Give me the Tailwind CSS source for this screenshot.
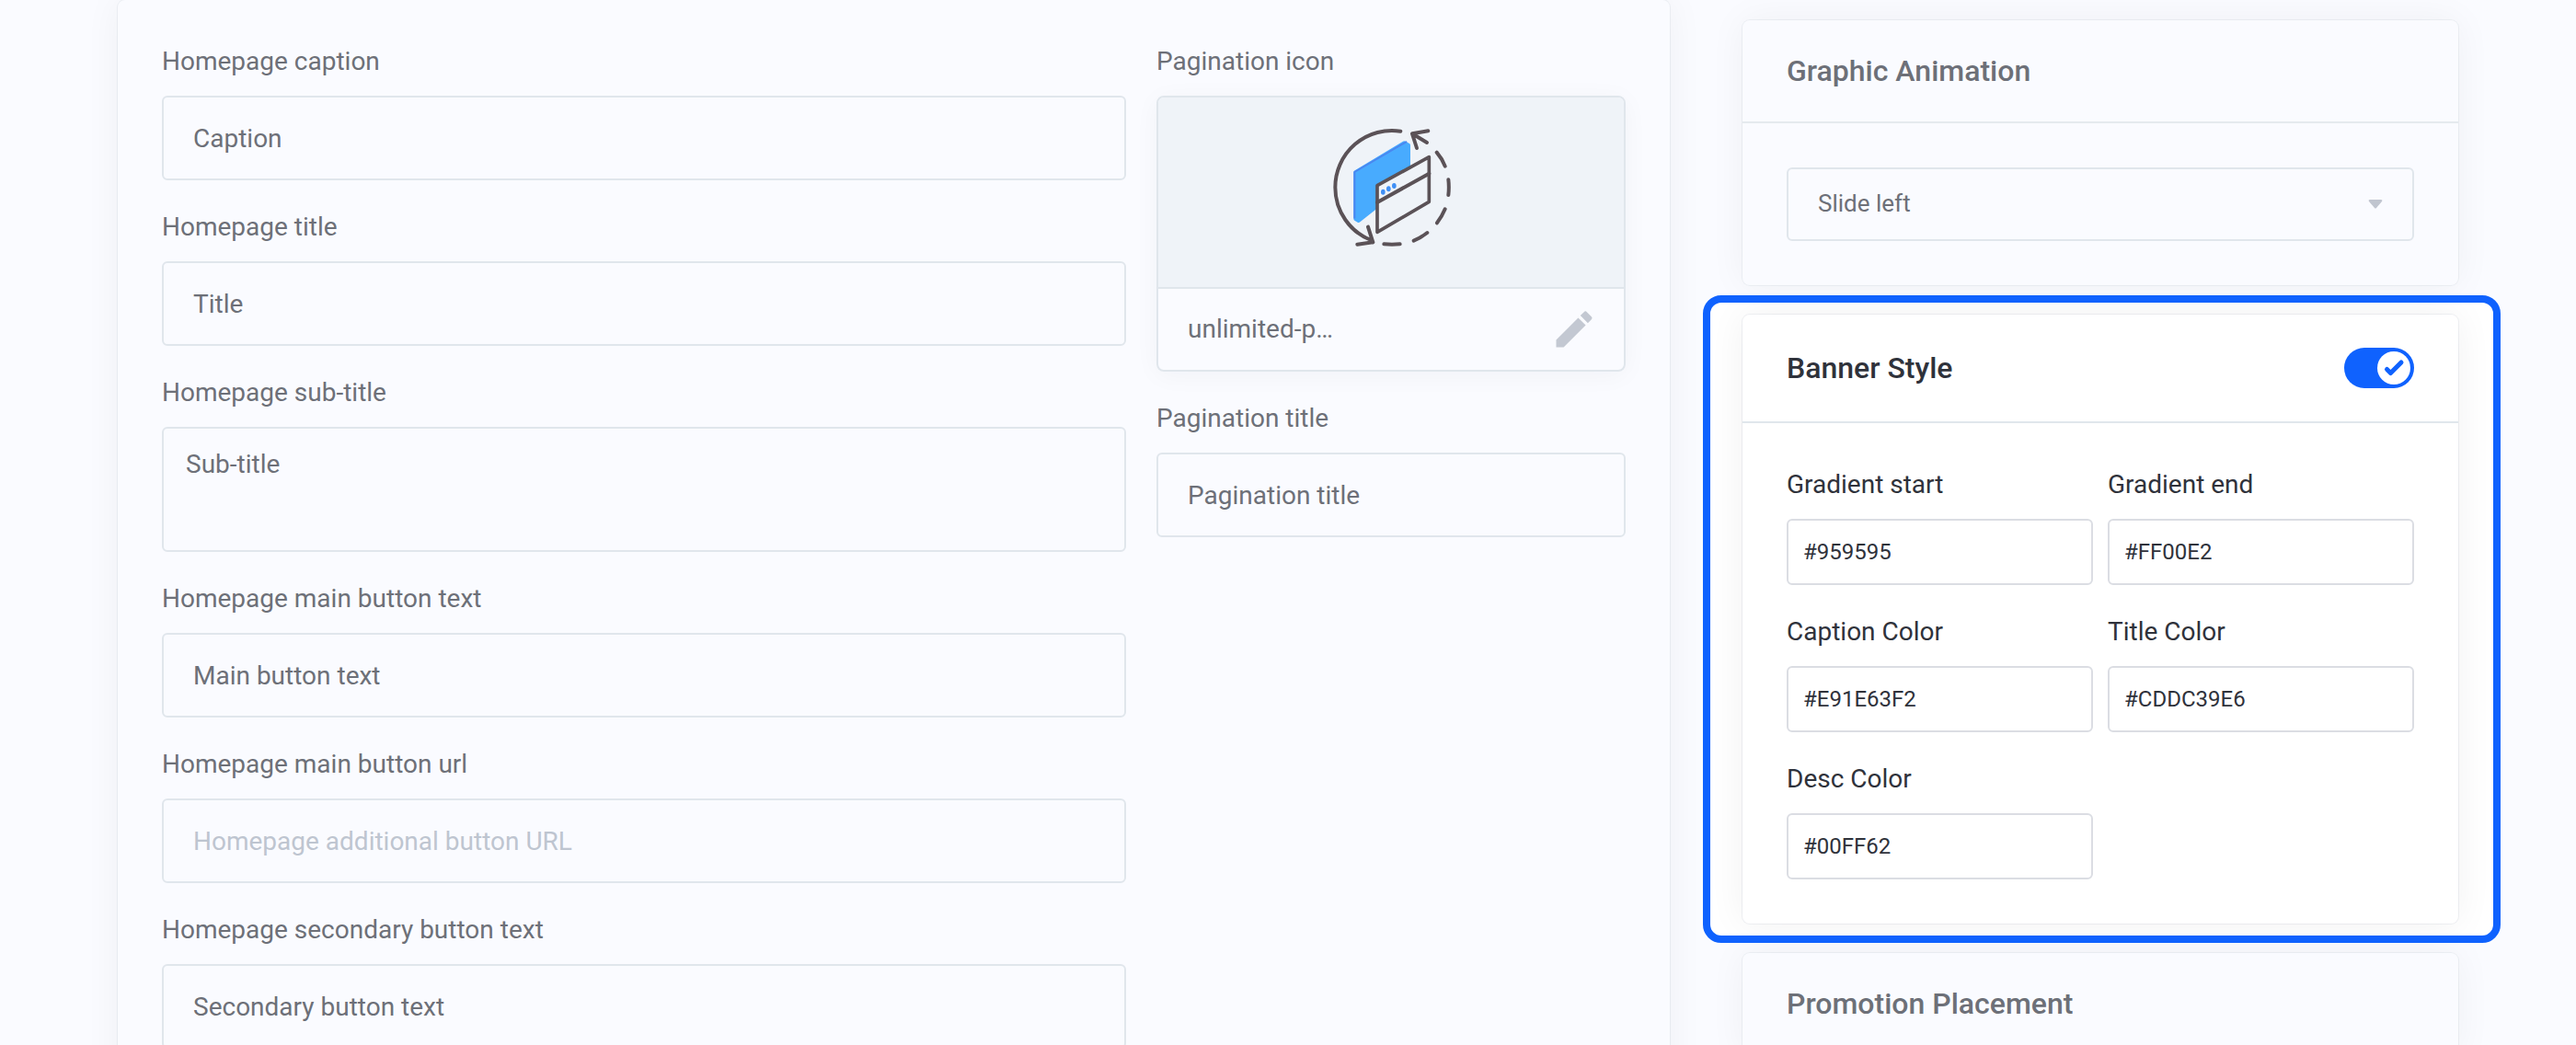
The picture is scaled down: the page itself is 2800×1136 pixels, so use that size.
<!DOCTYPE html>
<html lang="en">
<head>
<meta charset="utf-8">
<title>Homepage promotion</title>
<script src="https://cdn.jsdelivr.net/npm/@tailwindcss/browser@4"></script>
</head>
<body class="h-screen overflow-hidden bg-[#fafbff] font-[Roboto,sans-serif] text-[28px] leading-[38px] text-[#6d7078]">
<main class="grid grid-cols-[1687fr_778fr] items-start gap-[79px] px-32">

  <form class="grid grid-cols-[1048fr_510fr] items-start gap-[33px] rounded-lg bg-[#fafbff] p-12 shadow-[0_0_40px_rgba(20,30,30,0.05),0_0_0_1px_rgba(20,60,80,0.05)]">
    <div class="flex flex-col gap-8">
      <div class="flex flex-col gap-[18px]">
        <label for="caption">Homepage caption</label>
        <input id="caption" type="text" value="Caption" class="h-[92px] w-full rounded-md border-2 border-[#e0e6ec] px-8">
      </div>
      <div class="flex flex-col gap-[18px]">
        <label for="title">Homepage title</label>
        <input id="title" type="text" value="Title" class="h-[92px] w-full rounded-md border-2 border-[#e0e6ec] px-8">
      </div>
      <div class="flex flex-col gap-[18px]">
        <label for="subtitle">Homepage sub-title</label>
        <textarea id="subtitle" class="block h-[136px] w-full resize-none rounded-md border-2 border-[#e0e6ec] px-6 py-5">Sub-title</textarea>
      </div>
      <div class="flex flex-col gap-[18px]">
        <label for="main-text">Homepage main button text</label>
        <input id="main-text" type="text" value="Main button text" class="h-[92px] w-full rounded-md border-2 border-[#e0e6ec] px-8">
      </div>
      <div class="flex flex-col gap-[18px]">
        <label for="main-url">Homepage main button url</label>
        <input id="main-url" type="text" placeholder="Homepage additional button URL" class="h-[92px] w-full rounded-md border-2 border-[#e0e6ec] px-8 placeholder:text-[#bec5d0]">
      </div>
      <div class="flex flex-col gap-[18px]">
        <label for="second-text">Homepage secondary button text</label>
        <input id="second-text" type="text" value="Secondary button text" class="h-[92px] w-full rounded-md border-2 border-[#e0e6ec] px-8">
      </div>
    </div>

    <div class="flex flex-col gap-8">
      <div class="flex flex-col gap-[18px]">
        <h3>Pagination icon</h3>
        <div class="overflow-hidden rounded-lg border-2 border-[#e0e6ec] shadow-[0_4px_28px_rgba(20,30,50,0.04)]">
          <div class="flex h-[208px] items-center justify-center border-b-2 border-[#e0e6ec] bg-[#eff3f8]">
            <svg class="h-[140px] w-[136px]" viewBox="69 57 408 420" fill="none" stroke-linecap="round" stroke-linejoin="round" aria-hidden="true">
              <path d="M151 202q0-4 4-6L312 101q4-3 8 0l13 7q3 2 3 6v120L172 364q-4 3-8 1l-10-6q-3-2-3-6z" fill="#48abfe"/>
              <path d="M154 350V201L322 103" stroke="#4a86f0" stroke-width="6"/>
              <path d="M228 245L397 152V298L228 397z" fill="#eff3f8" stroke="#5b5257" stroke-width="11"/>
              <g stroke="#5b5257" stroke-width="12">
                <path d="M228 300L397 206"/>
                <path d="M304 68A185 185 0 0 0 91 251A185 185 0 0 0 212 425L214 430M198 380L214 430L163 437"/>
                <path d="M394 67L342 76L357 123M342 76L390 105"/>
                <path d="M422 137Q440 158 449 182M460 226Q463 250 460 276M449 322Q438 348 423 367M391 399Q368 417 347 425M302 436Q276 438 250 436"/>
              </g>
              <g fill="#3f8ff5"><ellipse cx="247" cy="266" rx="7" ry="9"/><ellipse cx="265" cy="256" rx="7" ry="9"/><ellipse cx="283" cy="246" rx="7" ry="9"/></g>
            </svg>
          </div>
          <div class="flex h-[88px] items-center justify-between pr-7 pl-8">
            <span>unlimited-p…</span>
            <button type="button" aria-label="Edit icon" class="text-[#c3c8d2]">
              <svg class="size-[52px]" viewBox="0 0 24 24" fill="currentColor"><path d="M3 17.25V21h3.75L17.81 9.94l-3.75-3.75L3 17.25zM20.71 7.04a1 1 0 0 0 0-1.41l-2.34-2.34a1 1 0 0 0-1.41 0l-1.83 1.83 3.75 3.75 1.83-1.83z"/></svg>
            </button>
          </div>
        </div>
      </div>
      <div class="flex flex-col gap-[18px]">
        <label for="pag-title">Pagination title</label>
        <input id="pag-title" type="text" value="Pagination title" class="h-[92px] w-full rounded-md border-2 border-[#e0e6ec] px-8">
      </div>
    </div>
  </form>

  <aside class="flex flex-col gap-8 pt-[22px]">
    <section class="rounded-lg bg-[#fafbff] shadow-[0_0_40px_rgba(20,30,30,0.05),0_0_0_1px_rgba(20,60,80,0.05)]">
      <h2 class="border-b-2 border-[#e5eaee] px-12 py-9 text-[32px] leading-[38px] font-medium">Graphic Animation</h2>
      <div class="p-12">
        <div class="relative">
          <select aria-label="Graphic Animation" class="block h-20 w-full appearance-none rounded-md border-2 border-[#e0e6ec] px-8 pb-0.5 text-[26px]">
            <option>Slide left</option>
          </select>
          <svg class="pointer-events-none absolute top-[35px] right-[34px] h-[10px] w-4" viewBox="0 0 16 10" aria-hidden="true"><path d="M2 0h12q2 0 1 2L9 9q-1 1-2 0L1 2Q0 0 2 0z" fill="#c0c5cf"/></svg>
        </div>
      </div>
    </section>

    <div class="relative z-10 -my-[21px] -mr-[46px] -ml-[43px] overflow-hidden rounded-[20px] border-8 border-[#0f62fe] bg-white py-[13px] pr-[38px] pl-[35px] text-[#2f323b]">
      <section class="rounded-lg bg-white shadow-[0_0_40px_rgba(40,40,20,0.06),0_0_0_1px_rgba(20,40,90,0.06)]">
        <header class="flex items-center justify-between border-b-2 border-[#e0e6ec] px-12 py-9">
          <h2 class="text-[32px] leading-[38px] font-medium">Banner Style</h2>
          <label class="flex h-11 w-[76px] items-center justify-end rounded-full bg-[#0f62fe] p-1">
            <input type="checkbox" checked aria-label="Banner Style" class="sr-only">
            <svg class="size-9" viewBox="0 0 36 36" fill="none" aria-hidden="true"><circle cx="18" cy="18" r="18" fill="#fff"/><path d="M10.500 19.500l4 4L26 12" stroke="#0f62fe" stroke-width="5" stroke-linecap="round" stroke-linejoin="round"/></svg>
          </label>
        </header>
        <div class="grid grid-cols-2 gap-x-4 gap-y-8 p-12">
          <div class="flex flex-col gap-[18px]">
            <label for="g-start">Gradient start</label>
            <input id="g-start" type="text" value="#959595" class="h-[72px] w-full rounded-md border-2 border-[#dbdde3] px-4 text-2xl">
          </div>
          <div class="flex flex-col gap-[18px]">
            <label for="g-end">Gradient end</label>
            <input id="g-end" type="text" value="#FF00E2" class="h-[72px] w-full rounded-md border-2 border-[#dbdde3] px-4 text-2xl">
          </div>
          <div class="flex flex-col gap-[18px]">
            <label for="c-caption">Caption Color</label>
            <input id="c-caption" type="text" value="#E91E63F2" class="h-[72px] w-full rounded-md border-2 border-[#dbdde3] px-4 text-2xl">
          </div>
          <div class="flex flex-col gap-[18px]">
            <label for="c-title">Title Color</label>
            <input id="c-title" type="text" value="#CDDC39E6" class="h-[72px] w-full rounded-md border-2 border-[#dbdde3] px-4 text-2xl">
          </div>
          <div class="flex flex-col gap-[18px]">
            <label for="c-desc">Desc Color</label>
            <input id="c-desc" type="text" value="#00FF62" class="h-[72px] w-full rounded-md border-2 border-[#dbdde3] px-4 text-2xl">
          </div>
        </div>
      </section>
    </div>

    <section class="rounded-lg bg-[#fafbff] shadow-[0_0_40px_rgba(20,30,30,0.05),0_0_0_1px_rgba(20,60,80,0.05)]">
      <h2 class="border-b-2 border-[#e5eaee] px-12 py-9 text-[32px] leading-[38px] font-medium">Promotion Placement</h2>
    </section>
  </aside>
</main>
</body>
</html>
